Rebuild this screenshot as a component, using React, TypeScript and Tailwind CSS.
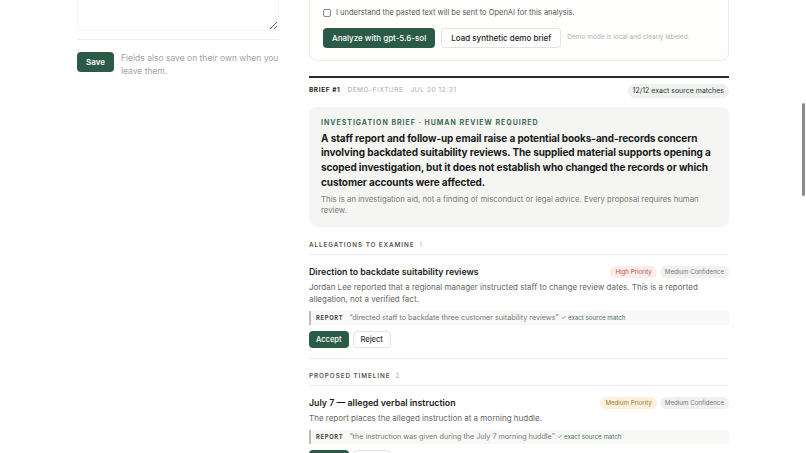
import React from "react"

type Item = {
  title: string
  priority: "High" | "Medium"
  desc: string
  quote: string
}

const allegations: Item[] = [
  {
    title: "Direction to backdate suitability reviews",
    priority: "High",
    desc: "Jordan Lee reported that a regional manager instructed staff to change review dates. This is a reported allegation, not a verified fact.",
    quote: "directed staff to backdate three customer suitability reviews",
  },
]

const timeline: Item[] = [
  {
    title: "July 7 — alleged verbal instruction",
    priority: "Medium",
    desc: "The report places the alleged instruction at a morning huddle.",
    quote: "the instruction was given during the July 7 morning huddle",
  },
]

function SectionLabel({ label, count }: { label: string; count: number }) {
  return (
    <div className="flex items-center gap-[5px] border-b border-[#efefec] pb-[4.5px] text-[6.3px] font-semibold uppercase leading-[9px] tracking-[0.15em] text-[#555]">
      {label}
      <span className="font-normal text-[#aaa]">{count}</span>
    </div>
  )
}

function Finding({ item, last }: { item: Item; last?: boolean }) {
  const high = item.priority === "High"
  return (
    <div className={`flex flex-col pt-[11px] ${last ? "" : "border-b border-[#efefec] pb-[10px]"}`}>
      <div className="flex items-center justify-between">
        <h3 className="text-[8.8px] font-semibold leading-[12px] text-[#1c1c1c]">{item.title}</h3>
        <div className="flex items-center gap-[3px]">
          <span
            className={`rounded-full px-[5px] text-[6.2px] leading-[12px] ${
              high ? "bg-[#fcecea] text-[#c0524c]" : "bg-[#fbf1dc] text-[#a27b2e]"
            }`}
          >
            {item.priority} Priority
          </span>
          <span className="rounded-full bg-[#f1f1ef] px-[5px] text-[6.2px] leading-[12px] text-[#777]">
            Medium Confidence
          </span>
        </div>
      </div>
      <p className="mt-[3px] text-[8px] leading-[12px] text-[#666]">{item.desc}</p>
      <div className="mt-[6px] flex h-[14px] items-center gap-[6px] border-l-2 border-[#bdbdb8] bg-[#f8f8f6] pl-[5px]">
        <span className="text-[5.8px] font-bold tracking-[0.12em] text-[#444]">REPORT</span>
        <span className="text-[7.2px] text-[#777]">
          “{item.quote}” <span className="text-[6.2px] text-[#4d6e5e]">✓ exact source match</span>
        </span>
      </div>
      <div className="mt-[6px] flex gap-[4px]">
        <button className="h-[17px] rounded-[4px] bg-[#2c5a48] px-[7px] text-[7.5px] font-medium text-white">
          Accept
        </button>
        <button className="h-[17px] rounded-[4px] border border-[#e3e3df] bg-white px-[7px] text-[7.5px] font-medium text-[#333]">
          Reject
        </button>
      </div>
    </div>
  )
}

export default function App() {
  return (
    <div
      className="relative h-screen overflow-hidden bg-white"
      style={{ fontFamily: "Inter, 'Noto Sans', sans-serif" }}
    >
      <div className="mx-auto -mt-[60px] flex w-[652px] gap-[30px]">
        {/* Left column */}
        <aside className="flex w-[202px] shrink-0 flex-col">
          <textarea
            className="h-[91px] w-full resize-y rounded-[4px] border border-[#f3f3f1] bg-white p-2 text-[8px] outline-none"
            defaultValue=""
          />
          <div className="mt-[8px] flex items-start gap-[7px] border-t border-[#eeeeeb] pt-[12px]">
            <button className="h-[20px] w-[37px] shrink-0 rounded-[4px] bg-[#2c5a48] text-[8px] font-semibold text-white">
              Save
            </button>
            <p className="text-[8.5px] leading-[13px] text-[#a3a3a0]">
              Fields also save on their own when you leave them.
            </p>
          </div>
        </aside>

        {/* Main column */}
        <main className="flex w-[420px] flex-col">
          <div className="rounded-b-[8px] border border-t-0 border-[#ebebe8] bg-[#fefefd] px-[13px] pb-[12px] pt-[68px]">
            <label className="flex items-center gap-[5px] text-[7.5px] leading-[10px] text-[#555]">
              <span className="h-[8px] w-[8px] rounded-[2px] border border-[#888] bg-white" />
              I understand the pasted text will be sent to OpenAI for this analysis.
            </label>
            <div className="mt-[10px] flex items-center gap-[6px]">
              <button className="h-[20px] rounded-[4px] bg-[#2c5a48] px-[9px] text-[8px] font-medium text-white">
                Analyze with gpt-5.6-sol
              </button>
              <button className="h-[20px] rounded-[4px] border border-[#e3e3df] bg-white px-[9px] text-[8px] font-medium text-[#222]">
                Load synthetic demo brief
              </button>
              <span className="text-[6.5px] text-[#b0b0ac]">Demo mode is local and clearly labeled.</span>
            </div>
          </div>

          <section className="mt-[15px] border-t-2 border-[#2b2b2b] pt-[6px]">
            <div className="flex items-center justify-between">
              <div className="flex items-center gap-[7px] text-[6.4px] uppercase tracking-[0.1em]">
                <span className="font-bold text-[#222]">Brief #1</span>
                <span className="text-[#a8a8a4]">Demo-fixture</span>
                <span className="text-[#a8a8a4]">Jul 20 12:31</span>
              </div>
              <span className="rounded-full bg-[#eef2ee] px-[5px] text-[7px] leading-[14px] text-[#333]">
                12/12 exact source matches
              </span>
            </div>

            <div className="mt-[9px] rounded-[8px] bg-[#f5f6f3] px-[12px] pb-[11px] pt-[10.5px]">
              <div className="text-[7px] font-bold uppercase leading-[9px] tracking-[0.14em] text-[#3e6a56]">
                Investigation brief · Human review required
              </div>
              <h2 className="mt-[4px] text-[10px] font-bold leading-[14.7px] tracking-[-0.01em] text-[#1a1a1a]">
                A staff report and follow-up email raise a potential books-and-records concern involving
                backdated suitability reviews. The supplied material supports opening a scoped
                investigation, but it does not establish who changed the records or which customer
                accounts were affected.
              </h2>
              <p className="mt-[5px] text-[7.8px] leading-[11px] text-[#7a7a77]">
                This is an investigation aid, not a finding of misconduct or legal advice. Every proposal
                requires human review.
              </p>
            </div>

            <div className="mt-[13.5px]">
              <SectionLabel label="Allegations to examine" count={1} />
              {allegations.map((a) => (
                <Finding key={a.title} item={a} />
              ))}
            </div>

            <div className="mt-[12.5px]">
              <SectionLabel label="Proposed timeline" count={2} />
              {timeline.map((t) => (
                <Finding key={t.title} item={t} />
              ))}
            </div>
          </section>
        </main>
      </div>

      {/* overlay scrollbar */}
      <div className="absolute right-[1px] top-[103px] h-[93px] w-[3px] rounded-full bg-[#8a8a8a]" />
    </div>
  )
}
